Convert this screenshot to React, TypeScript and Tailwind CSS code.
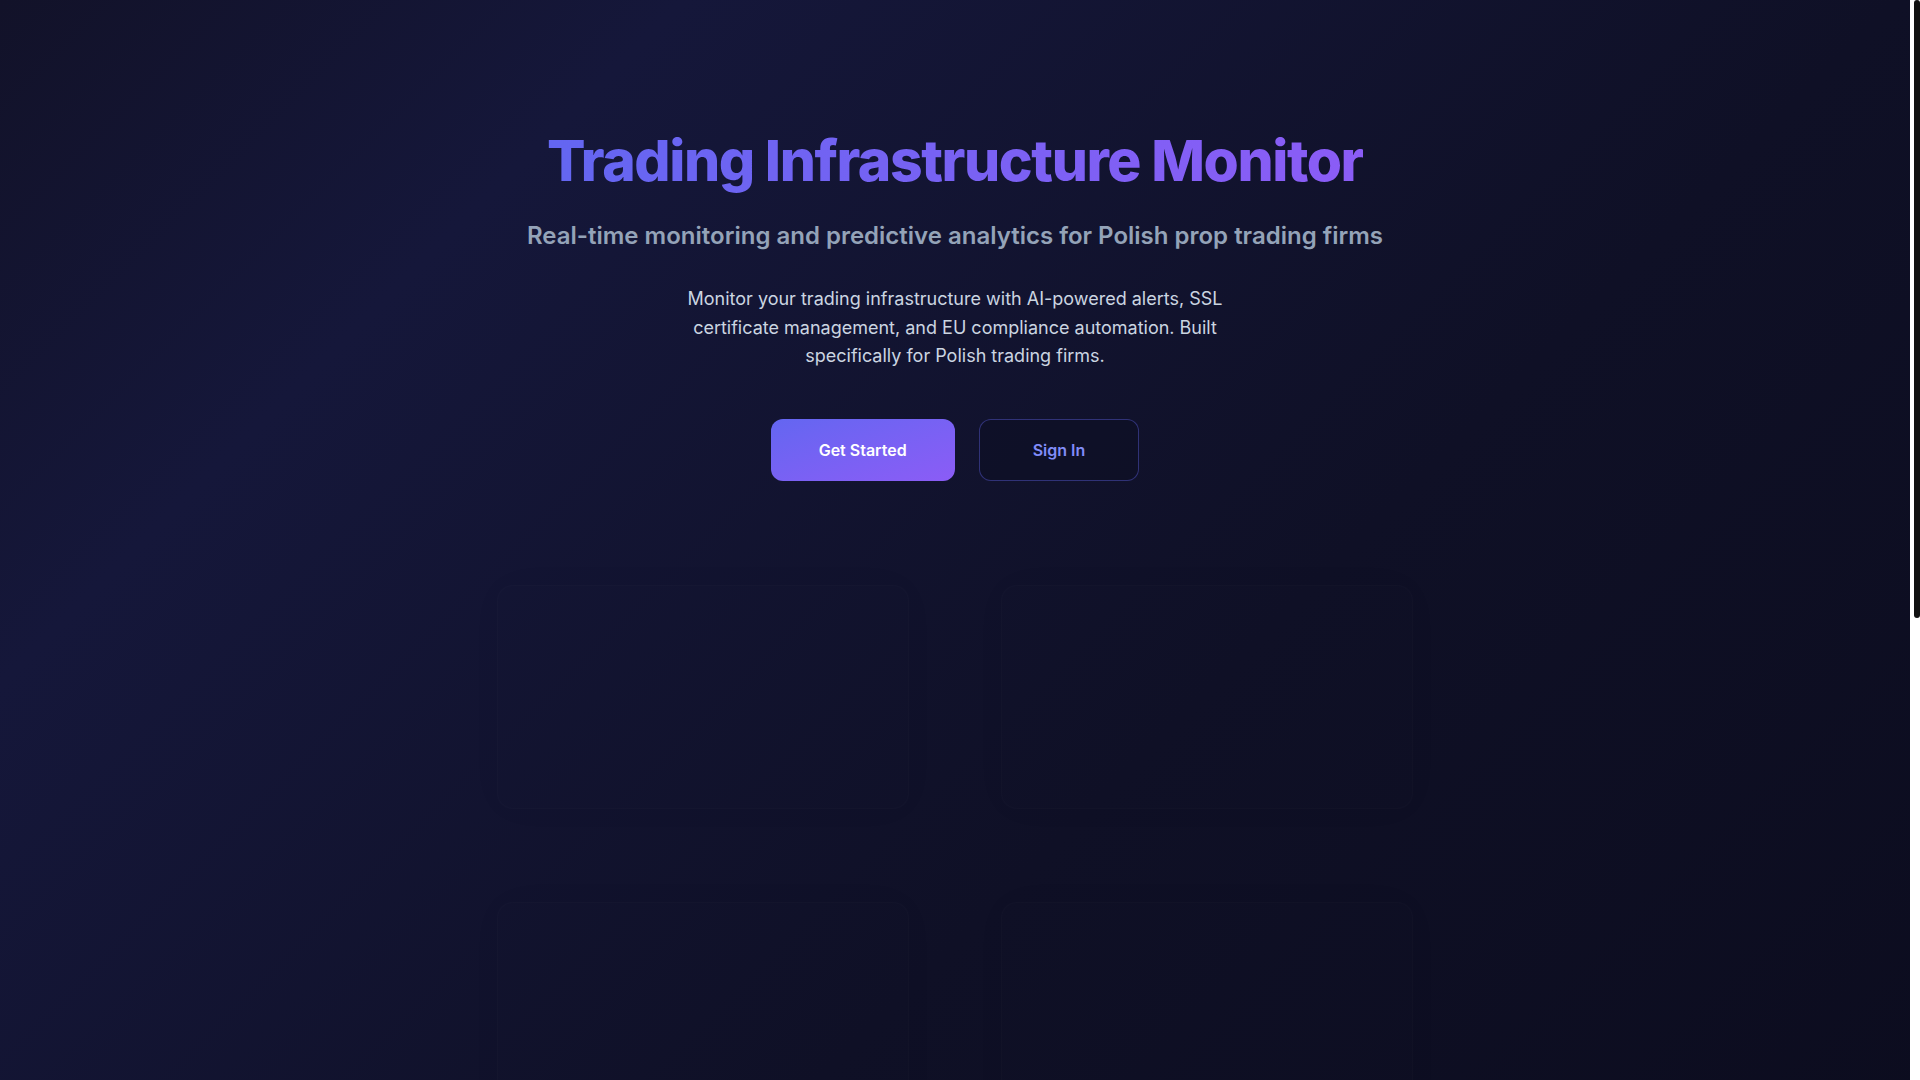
import React from 'react';

const cards = Array.from({ length: 8 }, (_, i) => i);

// classic scrollbar as in the reference: white track, dark thumb
function ScrollIndicator() {
  return (
    <div className="fixed right-0 top-0 h-screen w-[10px] bg-white">
      <div className="ml-[4px] h-[618px] w-[6px] rounded-full bg-[#111111]" />
    </div>
  );
}

export default function App() {
  return (
    <div className="pr-[10px]" style={{ fontFamily: 'Inter, "Noto Sans", sans-serif' }}>
      <main className="h-[1887px] bg-[linear-gradient(135deg,#121229_0%,#15173a_18%,#0f1026_50%,#0a0a1a_100%)]">
        <section className="flex flex-col items-center pt-[126px] text-center">
          <h1 className="bg-gradient-to-r from-[#6366f1] to-[#8b5cf6] bg-clip-text text-[57px] font-extrabold leading-[70px] tracking-tight text-transparent">
            Trading Infrastructure Monitor
          </h1>
          <p className="mt-6 text-2xl font-semibold text-[#94a3b8]">
            Real-time monitoring and predictive analytics for Polish prop trading firms
          </p>
          <p className="mt-[33px] max-w-xl text-lg leading-[28.5px] text-[#cbd5e1]">
            Monitor your trading infrastructure with AI-powered alerts, SSL certificate management, and EU
            compliance automation. Built specifically for Polish trading firms.
          </p>
          <div className="mt-12 flex gap-6">
            <button className="flex h-[62px] items-center rounded-xl bg-gradient-to-br from-[#6366f1] to-[#8b5cf6] px-12 text-base font-semibold text-white">
              Get Started
            </button>
            <button className="flex h-[62px] items-center rounded-xl border border-[#6366f1]/40 bg-[#0c0d22]/50 px-[53px] text-base font-semibold text-[#818cf8]">
              Sign In
            </button>
          </div>
        </section>

        {/* feature cards, still mid fade-in */}
        <section className="mx-auto mt-[104px] grid w-[916px] grid-cols-2 gap-x-[92px] gap-y-[93px] opacity-[0.02]">
          {cards.map((i) => (
            <div
              key={i}
              className="h-[224px] rounded-2xl border border-white/50 bg-white/10 shadow-[0_0_40px_rgba(0,0,0,0.9)]"
            />
          ))}
        </section>
      </main>
      <ScrollIndicator />
    </div>
  );
}
